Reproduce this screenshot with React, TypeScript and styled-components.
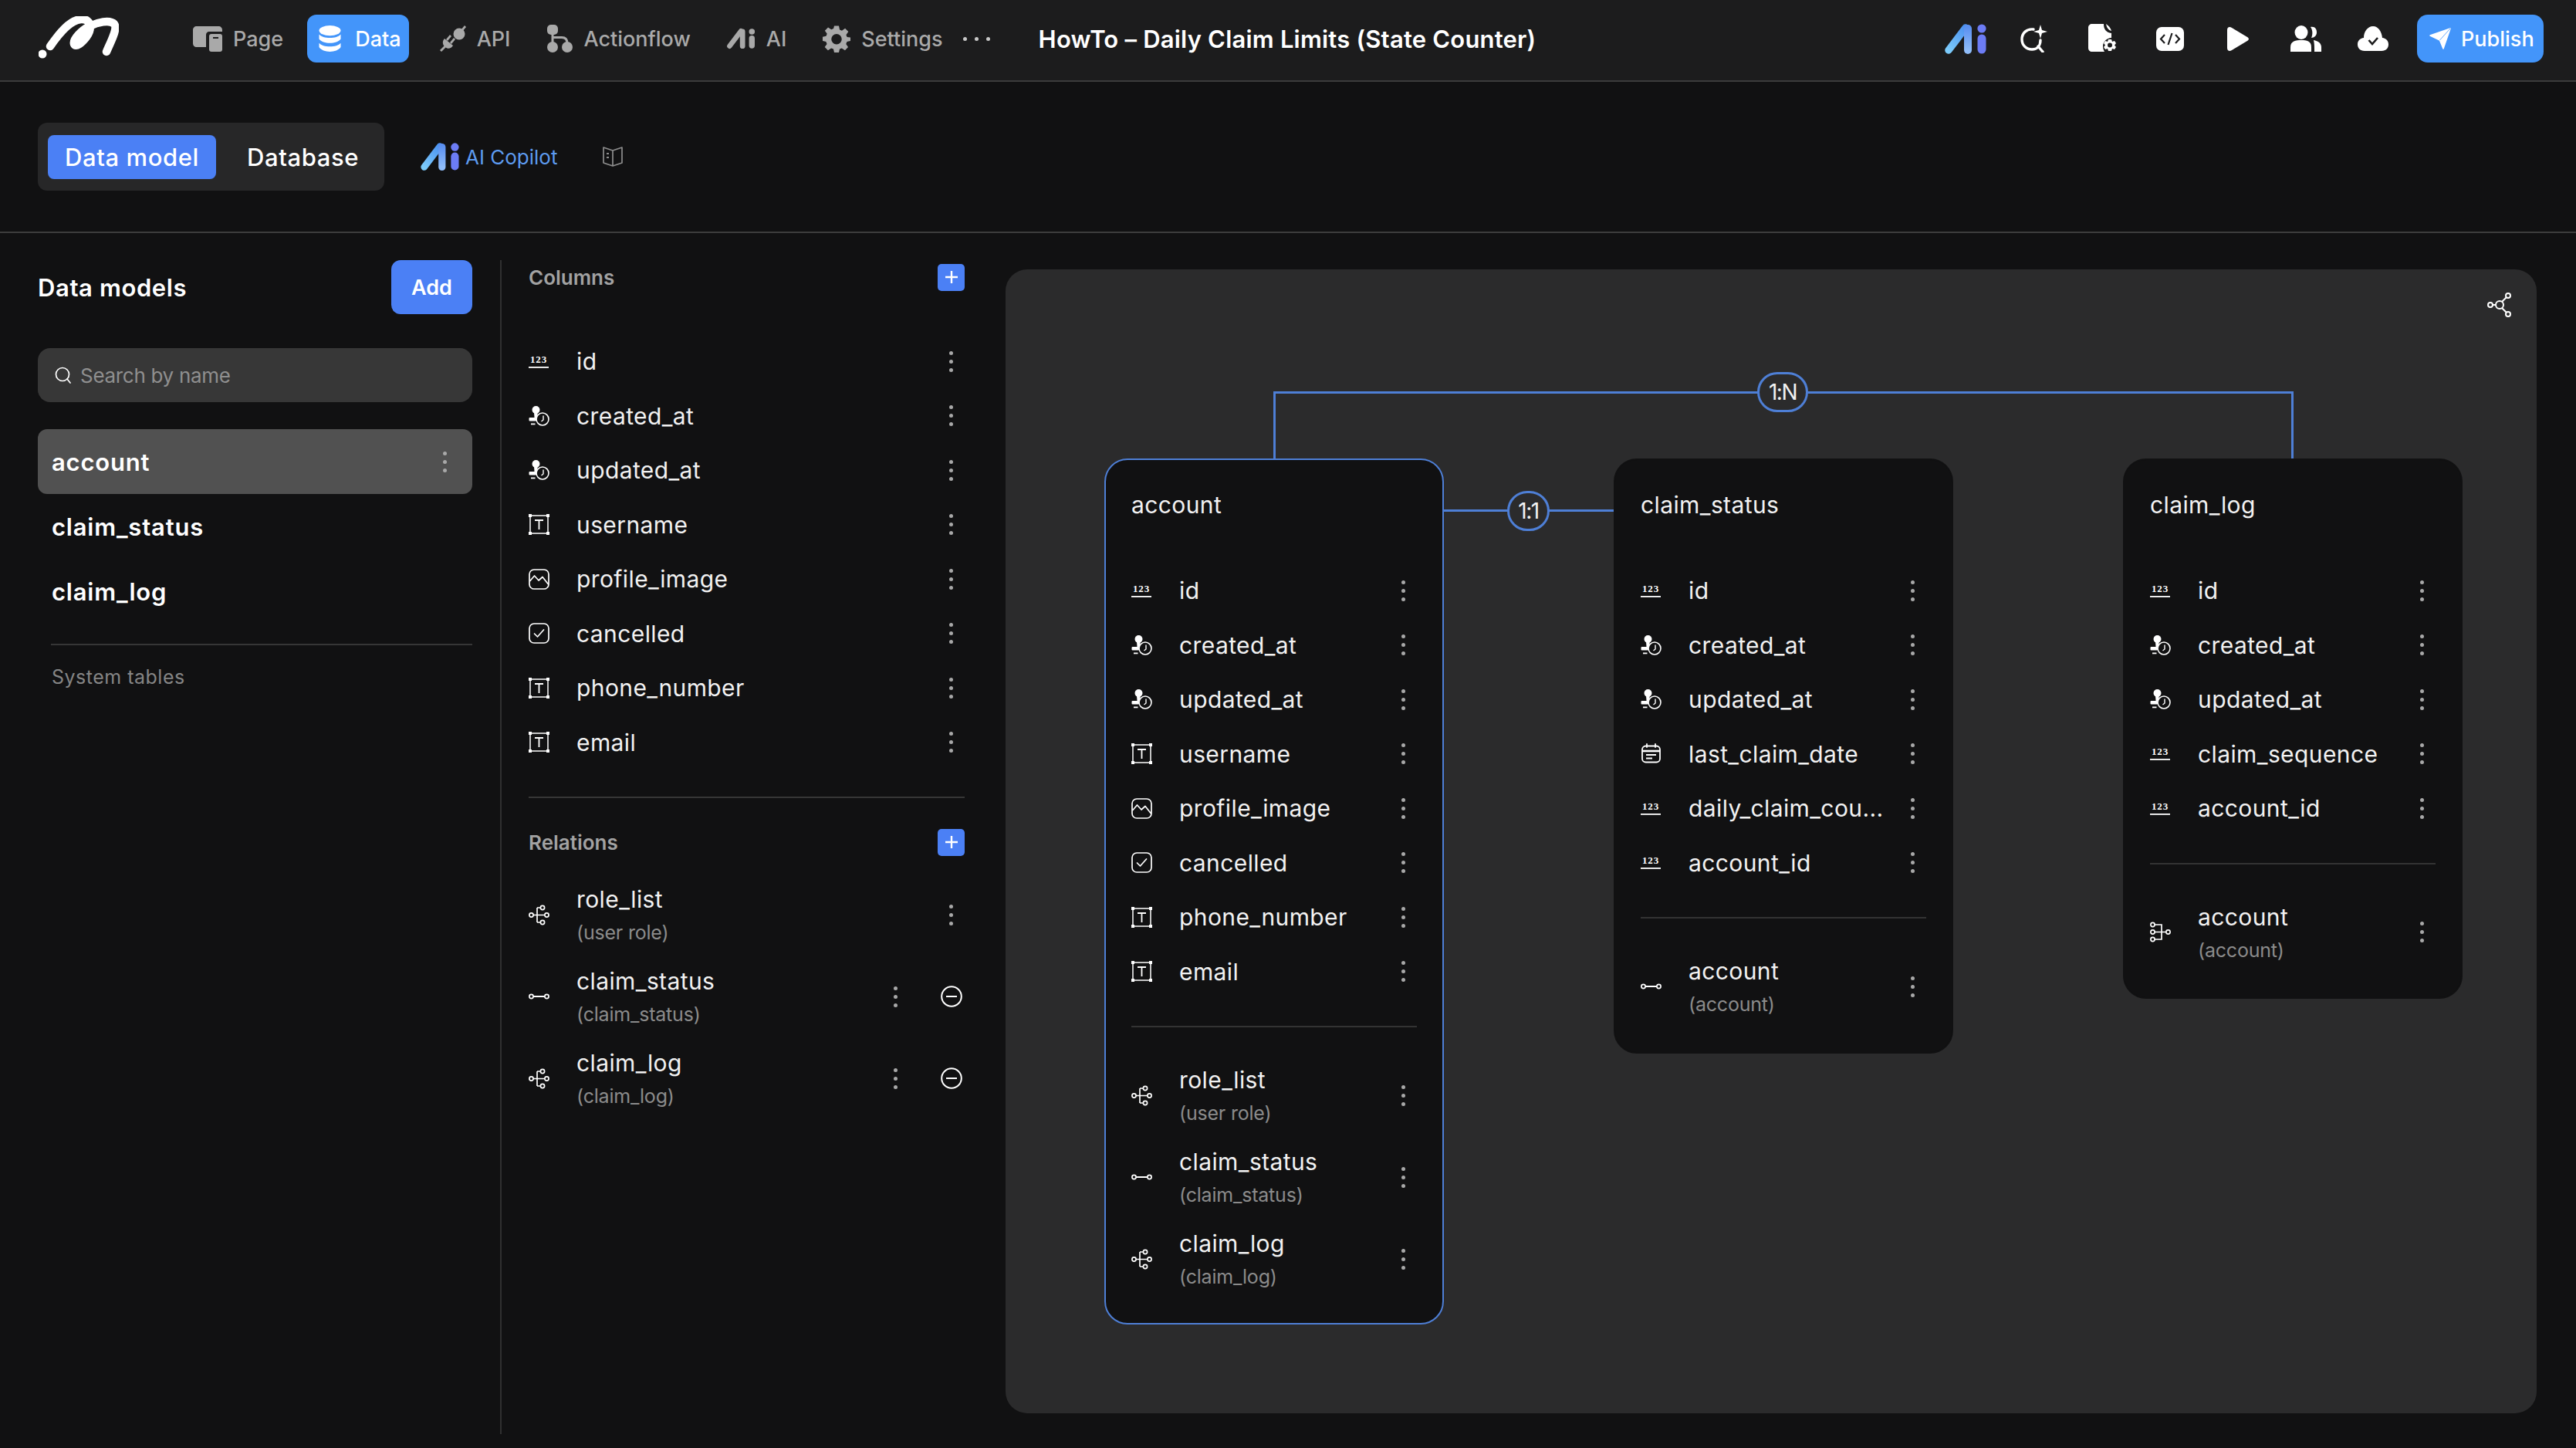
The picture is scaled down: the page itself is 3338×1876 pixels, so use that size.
import React from 'react'
import styled, { createGlobalStyle } from 'styled-components'

const FONT = '"Inter", "Noto Sans", sans-serif'

const GlobalStyle = createGlobalStyle`
  html, body {
    margin: 0;
    padding: 0;
    background: #111112;
    font-family: ${FONT};
  }
  * { box-sizing: border-box; }
`

const Page = styled.div`
  width: 3338px;
  height: 1876px;
  display: flex;
  flex-direction: column;
  background: #111112;
  overflow: hidden;
  color: #fff;
`

const Header = styled.header`
  height: 106px;
  flex-shrink: 0;
  display: flex;
  align-items: center;
  padding: 0 42px 4px 50px;
  background: #1c1c1d;
  border-bottom: 2px solid #3c3c3c;
`

const Logo = styled.svg`
  width: 104px;
  height: 58px;
  margin-right: 96px;
  flex-shrink: 0;
`

const Nav = styled.nav`
  display: flex;
  align-items: center;
  gap: 47px;
`

const NavItem = styled.div<{ $active?: boolean }>`
  display: flex;
  align-items: center;
  gap: ${({ $active }) => ($active ? '16px' : '14px')};
  height: 62px;
  padding: ${({ $active }) => ($active ? '0 10px 0 13px' : '0')};
  margin: ${({ $active }) => ($active ? '0 -7px 0 -16px' : '0')};
  border-radius: 12px;
  font-size: 27px;
  font-weight: 500;
  letter-spacing: 0;
  color: ${({ $active }) => ($active ? '#fff' : '#a9a9a9')};
  background: ${({ $active }) => ($active ? '#4395fa' : 'transparent')};
`

const MoreDots = styled.div`
  display: flex;
  gap: 10px;
  margin-left: 26px;
  & > i {
    width: 5px;
    height: 5px;
    border-radius: 50%;
    background: #c8c8c8;
  }
`

const Title = styled.h1`
  margin: 0 0 0 63px;
  font-size: 31px;
  font-weight: 600;
  letter-spacing: 0.2px;
  white-space: nowrap;
`

const HeaderActions = styled.div`
  margin-left: auto;
  display: flex;
  align-items: center;
`

const ActionSlot = styled.div<{ $w: number }>`
  width: ${({ $w }) => $w}px;
  display: flex;
  align-items: center;
  justify-content: center;
`

const PublishButton = styled.div`
  display: flex;
  align-items: center;
  gap: 13px;
  height: 62px;
  width: 164px;
  margin-left: 13px;
  padding-left: 16px;
  border-radius: 14px;
  background: #4395fa;
  font-size: 27px;
  font-weight: 500;
`

const SubBar = styled.div`
  height: 196px;
  flex-shrink: 0;
  display: flex;
  align-items: center;
  padding-left: 49px;
  border-bottom: 2px solid #3c3c3c;
`

const Tabs = styled.div`
  width: 449px;
  height: 88px;
  display: flex;
  align-items: center;
  padding: 0 13px;
  border-radius: 12px;
  background: #272728;
`

const Tab = styled.div<{ $active?: boolean }>`
  height: 57px;
  display: flex;
  align-items: center;
  padding: ${({ $active }) => ($active ? '0 22px' : '0 0 0 40px')};
  border-radius: 8px;
  font-size: 31px;
  font-weight: 500;
  letter-spacing: 0.6px;
  white-space: nowrap;
  background: ${({ $active }) => ($active ? '#4b80f5' : 'transparent')};
`

const CopilotLink = styled.div`
  display: flex;
  align-items: center;
  gap: 7px;
  margin-left: 47px;
  font-size: 26px;
  color: #5d9bf0;
`

const BookIcon = styled.svg`
  width: 28px;
  height: 28px;
  margin-left: 58px;
`

const Body = styled.div`
  flex: 1;
  min-height: 0;
  display: flex;
  padding: 35px 51px 18px 49px;
`

const ModelsPanel = styled.aside`
  width: 563px;
  flex-shrink: 0;
  display: flex;
  flex-direction: column;
`

const ModelsHead = styled.div`
  height: 70px;
  display: flex;
  align-items: center;
  justify-content: space-between;
`

const ModelsTitle = styled.div`
  font-size: 31px;
  font-weight: 600;
  letter-spacing: 0.6px;
`

const AddButton = styled.div`
  width: 105px;
  height: 70px;
  display: flex;
  align-items: center;
  justify-content: center;
  border-radius: 12px;
  background: #4b80f5;
  font-size: 27px;
  font-weight: 600;
`

const SearchBox = styled.div`
  height: 70px;
  margin-top: 44px;
  display: flex;
  align-items: center;
  gap: 11px;
  padding-left: 22px;
  border-radius: 16px;
  background: #373737;
  color: #8f8f8f;
  font-size: 26px;
  letter-spacing: -0.3px;
`

const ModelList = styled.div`
  margin-top: 35px;
  display: flex;
  flex-direction: column;
`

const ModelRow = styled.div<{ $active?: boolean }>`
  height: 84px;
  display: flex;
  align-items: center;
  justify-content: space-between;
  padding: 0 33px 0 18px;
  border-radius: 12px;
  font-size: 31px;
  font-weight: 600;
  letter-spacing: 0.8px;
  background: ${({ $active }) => ($active ? '#515151' : 'transparent')};
`

const ModelsDivider = styled.div`
  height: 2px;
  margin: 26px 0 0 17px;
  background: #363636;
`

const SystemTables = styled.div`
  margin: 26px 0 0 18px;
  font-size: 25px;
  letter-spacing: 0.5px;
  color: #858585;
`

const ColumnsPanel = styled.section`
  width: 602px;
  flex-shrink: 0;
  margin-left: 36px;
  padding-left: 35px;
  border-left: 2px solid #303030;
  display: flex;
  flex-direction: column;
`

const SectionHead = styled.div<{ $top: number }>`
  display: flex;
  align-items: center;
  justify-content: space-between;
  height: 36px;
  margin-top: ${({ $top }) => $top}px;
  color: #a2a2a2;
  font-size: 26px;
  font-weight: 600;
`

const PlusButton = styled.div`
  width: 35px;
  height: 35px;
  display: flex;
  align-items: center;
  justify-content: center;
  border-radius: 5px;
  background: #4b80f5;
`

const FieldList = styled.div<{ $top: number }>`
  margin-top: ${({ $top }) => $top}px;
  display: flex;
  flex-direction: column;
`

const FieldRow = styled.div`
  height: 70.5px;
  display: flex;
  align-items: center;
  font-size: 30px;
  letter-spacing: 0.4px;
  color: #f2f2f2;
`

const RelationRow = styled.div`
  height: 106px;
  display: flex;
  align-items: center;
  font-size: 30px;
  letter-spacing: 0.4px;
  color: #f2f2f2;
`

const IconSlot = styled.div`
  width: 27px;
  flex-shrink: 0;
  margin-right: 35px;
  display: flex;
  align-items: center;
  justify-content: center;
  color: #fff;
`

const FieldName = styled.div`
  flex: 1;
  min-width: 0;
  white-space: nowrap;
`

const RelationSub = styled.div`
  margin-top: 10px;
  font-size: 25px;
  letter-spacing: -0.2px;
  color: #8b8b8b;
`

const Kebab = styled.div`
  width: 5px;
  flex-shrink: 0;
  display: flex;
  flex-direction: column;
  gap: 6px;
  & > i {
    width: 5px;
    height: 5px;
    border-radius: 50%;
    background: #a8a8a8;
  }
`

const KebabEnd = styled(Kebab)`
  margin-right: 15px;
`

const KebabBeforeMinus = styled(Kebab)`
  margin-right: 56px;
`

const MinusIcon = styled.svg`
  width: 28px;
  height: 28px;
  flex-shrink: 0;
  margin-right: 3px;
`

const PanelDivider = styled.div`
  height: 2px;
  margin-top: 35px;
  background: #363636;
`

const Canvas = styled.main`
  flex: 1;
  position: relative;
  margin: 12px 0 27px 53px;
  border-radius: 28px;
  background: #2b2b2c;
`

const ShareIcon = styled.svg`
  position: absolute;
  top: 30px;
  right: 32px;
  width: 32px;
  height: 32px;
`

const Card = styled.div<{ $x: number; $y: number; $w: number; $h: number; $selected?: boolean }>`
  position: absolute;
  left: ${({ $x }) => $x}px;
  top: ${({ $y }) => $y}px;
  width: ${({ $w }) => $w}px;
  height: ${({ $h }) => $h}px;
  padding: 0 33px;
  border-radius: 30px;
  background: #111112;
  border: 2px solid ${({ $selected }) => ($selected ? '#4e7fd6' : '#111112')};
`

const CardTitle = styled.div`
  height: 116px;
  display: flex;
  align-items: center;
  font-size: 30px;
  letter-spacing: 0.4px;
  color: #f2f2f2;
`

const CardFields = styled.div`
  margin-top: 18px;
  display: flex;
  flex-direction: column;
`

const CardDivider = styled.div`
  height: 2px;
  margin: 35px 0;
  background: #333;
`

const Link = styled.div<{ $x: number; $y: number; $w: number; $h: number }>`
  position: absolute;
  left: ${({ $x }) => $x}px;
  top: ${({ $y }) => $y}px;
  width: ${({ $w }) => $w}px;
  height: ${({ $h }) => $h}px;
  background: #4e7fd6;
`

const LinkBadge = styled.div<{ $x: number; $y: number; $w: number }>`
  position: absolute;
  left: ${({ $x }) => $x}px;
  top: ${({ $y }) => $y}px;
  width: ${({ $w }) => $w}px;
  height: 52px;
  display: flex;
  align-items: center;
  justify-content: center;
  border-radius: 26px;
  border: 3px solid #4e7fd6;
  background: #2b2b2c;
  font-size: 28px;
  letter-spacing: -1.5px;
  color: #f2f2f2;
`

type IconName = 'num' | 'stamp' | 'text' | 'image' | 'check' | 'date' | 'many' | 'one' | 'belongs'

const NumLabel = styled.text`
  font-family: 'Liberation Serif', serif;
  font-size: 13px;
  font-weight: 700;
  letter-spacing: 0.8px;
  fill: #fff;
`

const FieldIcon = ({ name }: { name: IconName }) => {
  switch (name) {
    case 'num':
      return (
        <svg width="27" height="27" viewBox="0 0 27 27" fill="#fff">
          <NumLabel x="13" y="14.5" textAnchor="middle">
            123
          </NumLabel>
          <rect x="0" y="20" width="26" height="1.8" />
        </svg>
      )
    case 'stamp':
      return (
        <svg width="27" height="26" viewBox="0 0 27 26" fill="none">
          <circle cx="9.5" cy="5" r="5" fill="#fff" />
          <path d="M7 8 H12 L10.5 15 H7.5 Z" fill="#fff" />
          <rect x="0.5" y="15" width="9.5" height="4.5" rx="1" fill="#fff" />
          <rect x="3" y="22.5" width="5.5" height="1.8" fill="#fff" />
          <circle cx="18" cy="17" r="8" fill="#111112" stroke="#fff" strokeWidth="1.6" />
          <path d="M19 12.5 V18 L16.5 20" stroke="#fff" strokeWidth="1.4" />
        </svg>
      )
    case 'text':
      return (
        <svg width="27" height="27" viewBox="0 0 27 27" fill="none" stroke="#fff" strokeWidth="1.5">
          <rect x="2" y="2" width="23" height="23" />
          <path d="M8 8 H19 M13.5 8 V20" strokeWidth="1.8" />
          <g fill="#fff" stroke="none">
            <rect x="0" y="0" width="4" height="4" />
            <rect x="23" y="0" width="4" height="4" />
            <rect x="0" y="23" width="4" height="4" />
            <rect x="23" y="23" width="4" height="4" />
          </g>
        </svg>
      )
    case 'image':
      return (
        <svg width="27" height="27" viewBox="0 0 27 27" fill="none" stroke="#fff" strokeWidth="1.7">
          <rect x="1" y="1" width="25" height="25" rx="6" />
          <path d="M1.5 16 L7.5 9 L13 15 L18 10.5 L25.5 20" strokeLinejoin="round" />
        </svg>
      )
    case 'check':
      return (
        <svg width="27" height="27" viewBox="0 0 27 27" fill="none" stroke="#fff" strokeWidth="1.7">
          <rect x="1" y="1" width="25" height="25" rx="6" />
          <path d="M7.5 14 L11.5 18 L19.5 9" strokeLinecap="round" strokeLinejoin="round" />
        </svg>
      )
    case 'date':
      return (
        <svg width="27" height="27" viewBox="0 0 27 27" fill="none" stroke="#fff" strokeWidth="1.8">
          <rect x="2" y="3.5" width="23" height="21" rx="4.5" />
          <path d="M2 10 H25" strokeWidth="2.6" />
          <path d="M7 15 H20 M7 19.5 H15" />
          <path d="M8 1 V5 M19 1 V5" strokeLinecap="round" />
        </svg>
      )
    case 'many':
      return (
        <svg width="27" height="27" viewBox="0 0 27 27" fill="none" stroke="#fff" strokeWidth="1.7">
          <circle cx="3.5" cy="13.5" r="2.6" />
          <circle cx="18" cy="4" r="2.6" />
          <circle cx="23.5" cy="13.5" r="2.6" />
          <circle cx="18" cy="23" r="2.6" />
          <path d="M6 13.5 H21 M11 4 H15.5 M11 4 V23 M11 23 H15.5" />
        </svg>
      )
    case 'one':
      return (
        <svg width="27" height="10" viewBox="0 0 27 10" fill="none" stroke="#fff" strokeWidth="1.7">
          <circle cx="3.5" cy="5" r="2.6" />
          <circle cx="23.5" cy="5" r="2.6" />
          <path d="M6 5 H21" strokeWidth="2" />
        </svg>
      )
    case 'belongs':
      return (
        <svg width="27" height="27" viewBox="0 0 27 27" fill="none" stroke="#fff" strokeWidth="1.7">
          <circle cx="3.5" cy="4" r="2.6" />
          <circle cx="3.5" cy="13.5" r="2.6" />
          <circle cx="3.5" cy="23" r="2.6" />
          <circle cx="23.5" cy="13.5" r="2.6" />
          <path d="M6 4 H15 V23 H6 M6 13.5 H21" />
        </svg>
      )
  }
}

const Dots = () => (
  <>
    <i />
    <i />
    <i />
  </>
)

const AiMark = ({ id, w, h, plain }: { id: string; w: number; h: number; plain?: boolean }) => (
  <svg width={w} height={h} viewBox="0 0 55 39" fill="none">
    <defs>
      <linearGradient id={id} gradientUnits="userSpaceOnUse" x1="4" y1="34" x2="28" y2="4">
        <stop offset="0" stopColor="#7ccbfb" />
        <stop offset="1" stopColor="#4a90f0" />
      </linearGradient>
      <linearGradient id={`${id}-b`} gradientUnits="userSpaceOnUse" x1="30" y1="34" x2="30" y2="4">
        <stop offset="0" stopColor="#8fbcf9" />
        <stop offset="1" stopColor="#5a8ff0" />
      </linearGradient>
    </defs>
    <line x1="5" y1="34" x2="27" y2="5" stroke={plain ? '#a9a9a9' : `url(#${id})`} strokeWidth="9.5" strokeLinecap="round" />
    <line x1="30" y1="6" x2="30" y2="34" stroke={plain ? '#a9a9a9' : `url(#${id}-b)`} strokeWidth="10" strokeLinecap="round" />
    <circle cx="48" cy="6" r="5.6" fill={plain ? '#a9a9a9' : '#6c7cf5'} />
    <line x1="48" y1="19" x2="48" y2="33" stroke={plain ? '#a9a9a9' : '#6c7cf5'} strokeWidth="11" strokeLinecap="round" />
  </svg>
)

const BASE_FIELDS: { icon: IconName; name: string }[] = [
  { icon: 'num', name: 'id' },
  { icon: 'stamp', name: 'created_at' },
  { icon: 'stamp', name: 'updated_at' },
]

const ACCOUNT_FIELDS: { icon: IconName; name: string }[] = [
  ...BASE_FIELDS,
  { icon: 'text', name: 'username' },
  { icon: 'image', name: 'profile_image' },
  { icon: 'check', name: 'cancelled' },
  { icon: 'text', name: 'phone_number' },
  { icon: 'text', name: 'email' },
]

const STATUS_FIELDS: { icon: IconName; name: string }[] = [
  ...BASE_FIELDS,
  { icon: 'date', name: 'last_claim_date' },
  { icon: 'num', name: 'daily_claim_cou...' },
  { icon: 'num', name: 'account_id' },
]

const LOG_FIELDS: { icon: IconName; name: string }[] = [
  ...BASE_FIELDS,
  { icon: 'num', name: 'claim_sequence' },
  { icon: 'num', name: 'account_id' },
]

const ACCOUNT_RELATIONS: { icon: IconName; name: string; sub: string }[] = [
  { icon: 'many', name: 'role_list', sub: '(user role)' },
  { icon: 'one', name: 'claim_status', sub: '(claim_status)' },
  { icon: 'many', name: 'claim_log', sub: '(claim_log)' },
]

const CardBlock = ({
  title,
  fields,
  relations,
  ...place
}: {
  title: string
  fields: { icon: IconName; name: string }[]
  relations: { icon: IconName; name: string; sub: string }[]
  $x: number
  $y: number
  $w: number
  $h: number
  $selected?: boolean
}) => (
  <Card {...place}>
    <CardTitle>{title}</CardTitle>
    <CardFields>
      {fields.map((f) => (
        <FieldRow key={f.name}>
          <IconSlot>
            <FieldIcon name={f.icon} />
          </IconSlot>
          <FieldName>{f.name}</FieldName>
          <KebabEnd>
            <Dots />
          </KebabEnd>
        </FieldRow>
      ))}
    </CardFields>
    <CardDivider />
    {relations.map((r) => (
      <RelationRow key={r.name}>
        <IconSlot>
          <FieldIcon name={r.icon} />
        </IconSlot>
        <FieldName>
          {r.name}
          <RelationSub>{r.sub}</RelationSub>
        </FieldName>
        <KebabEnd>
          <Dots />
        </KebabEnd>
      </RelationRow>
    ))}
  </Card>
)

const PlusGlyph = () => (
  <svg width="16" height="16" viewBox="0 0 16 16" stroke="#fff" strokeWidth="2.4">
    <path d="M8 0 V16 M0 8 H16" />
  </svg>
)

export default function App() {
  return (
    <Page>
      <GlobalStyle />
      <Header>
        <Logo viewBox="10 8 104 58" fill="none" stroke="#fff" strokeLinecap="round">
          <circle cx="15" cy="57" r="5.5" fill="#fff" stroke="none" />
          <path
            d="M25 47 C36 31 50 13 65 12 C78 11 80 24 72 35 C66 43 58 49 56 44 C54 38 66 26 76 21 C86 16 102 12 108 18 C113 24 103 42 98 54"
            strokeWidth="10.5"
          />
        </Logo>
        <Nav>
          <NavItem>
            <svg width="38" height="33" viewBox="0 0 38 33" fill="#a9a9a9">
              <path d="M5 0 H33 C36 0 38 2 38 5 V7 H22 C18 7 17 9 17 12 V27 H5 C2 27 0 25 0 22 V5 C0 2 2 0 5 0 Z" />
              <rect x="21" y="10" width="17" height="23" rx="3" />
              <rect x="26" y="14" width="7" height="2" fill="#1c1c1d" />
            </svg>
            Page
          </NavItem>
          <NavItem $active>
            <svg width="33" height="35" viewBox="0 0 33 40" fill="#fff">
              <ellipse cx="16.5" cy="7.5" rx="16" ry="7.5" />
              <path d="M0.5 13 C6 20 27 20 32.5 13 V20 C27 28 6 28 0.5 20 Z" />
              <path d="M0.5 26 C6 33 27 33 32.5 26 V32 C27 41 6 41 0.5 32 Z" />
            </svg>
            Data
          </NavItem>
          <NavItem>
            <svg width="34" height="34" viewBox="0 0 34 34" fill="#a9a9a9">
              <circle cx="25" cy="11" r="7.5" />
              <path d="M27 6 L32 0 L34 2 L29 8 Z" />
              <path d="M6 17 L17 26 C15 30 10 31 7 28 C3 25 3 20 6 17 Z" />
              <path d="M8 18 L13 12 L15 14 L10 20 Z M13 22 L18 16 L20 18 L15 24 Z" />
              <path d="M6 26 L0 32 L2 34 L8 28 Z" />
            </svg>
            API
          </NavItem>
          <NavItem>
            <svg width="34" height="36" viewBox="0 0 34 36" fill="#a9a9a9">
              <rect x="1" y="0" width="14" height="13" rx="5" />
              <rect x="6.5" y="12" width="3" height="12" />
              <circle cx="8" cy="29" r="7" />
              <circle cx="27" cy="29" r="7" />
              <path d="M8 16.5 H20 C25 16.5 27 19 27 24" fill="none" stroke="#a9a9a9" strokeWidth="3" />
            </svg>
            Actionflow
          </NavItem>
          <NavItem>
            <AiMark id="ai-nav" w={37} h={30} plain />
            AI
          </NavItem>
          <NavItem>
            <svg width="36" height="36" viewBox="0 0 24 24" fill="#a9a9a9">
              <path
                fillRule="evenodd"
                d="M10 1 H14 L14.7 4.3 L16.6 5.1 L19.4 3.2 L22.2 6 L20.3 8.8 L21.1 10.7 L24 11 V14 L21 14.7 L20.2 16.6 L22 19.4 L19.3 22.2 L16.5 20.4 L14.7 21 L14 24 H10 L9.3 21 L7.4 20.3 L4.6 22.2 L1.8 19.4 L3.7 16.6 L2.9 14.7 L0 14 V10.5 L3 9.8 L3.8 7.9 L1.9 5.1 L4.7 2.3 L7.5 4.2 L9.4 3.4 Z M12 8 A4.5 4.5 0 1 0 12 17 A4.5 4.5 0 1 0 12 8 Z"
              />
            </svg>
            Settings
          </NavItem>
        </Nav>
        <MoreDots>
          <Dots />
        </MoreDots>
        <Title>HowTo – Daily Claim Limits (State Counter)</Title>
        <HeaderActions>
          <ActionSlot $w={88}>
            <AiMark id="ai-head" w={55} h={39} />
          </ActionSlot>
          <ActionSlot $w={88.75}>
            <svg width="36" height="36" viewBox="0 0 36 36" fill="none" stroke="#fff" strokeWidth="3.4" strokeLinecap="round">
              <path d="M17 6 C8 5 2 11 2 19 C2 27 8 32 15 32 C22 32 26 27 26 20" />
              <path d="M23 28 L29 35" />
              <path d="M26 0 L28 7 L35 9 L28 11 L26 18 L24 11 L17 9 L24 7 Z" fill="#fff" stroke="none" />
            </svg>
          </ActionSlot>
          <ActionSlot $w={87.75}>
            <svg width="37" height="38" viewBox="0 0 37 38" fill="#fff">
              <path d="M5 0 H20 C20 7 23 11 30 12 V18 C24 18 19 23 19 29 C19 32 20 34 21 36 H5 C2 36 0 34 0 31 V5 C0 2 2 0 5 0 Z" />
              <path d="M23 0 C26 2 29 5 30 9 C26 8 24 5 23 0 Z" />
              <path
                fillRule="evenodd"
                d="M26 20 H30 L31 23 L34 22 L36 25 L34 27.5 L36 30 L34 33 L31 32 L30 35 H26 L25 32 L22 33 L20 30 L22 27.5 L20 25 L22 22 L25 23 Z M28 24.5 A3 3 0 1 0 28 30.5 A3 3 0 1 0 28 24.5 Z"
              />
            </svg>
          </ActionSlot>
          <ActionSlot $w={88.5}>
            <svg width="36" height="31" viewBox="0 0 36 31" fill="none">
              <rect width="36" height="31" rx="7" fill="#fff" />
              <path d="M11 10 L6 15.5 L11 21 M25 10 L30 15.5 L25 21 M20.5 8 L15.5 23" stroke="#1c1c1d" strokeWidth="2.2" />
            </svg>
          </ActionSlot>
          <ActionSlot $w={87.75}>
            <svg width="28" height="31" viewBox="0 0 28 31" fill="#fff">
              <path d="M0 4 C0 0 3 -1 6 1 L26 13 C28.5 14.5 28.5 16.5 26 18 L6 30 C3 32 0 31 0 27 Z" />
            </svg>
          </ActionSlot>
          <ActionSlot $w={86.5}>
            <svg width="40" height="34" viewBox="0 0 40 34" fill="#fff">
              <ellipse cx="14" cy="9" rx="8.5" ry="9" />
              <path d="M0 34 V28 C0 20 7 19 14 19 C21 19 27 20 27 28 V34 Z" />
              <path d="M26 2 C32 1 34 5 34 9 C34 13 31 16 27 16 C29 12 29 6 26 2 Z" />
              <path d="M30 19 C36 20 40 23 40 28 V34 H31 C31 28 31 23 30 19 Z" />
            </svg>
          </ActionSlot>
          <ActionSlot $w={88.25}>
            <svg width="40" height="32" viewBox="0 0 40 32" fill="none">
              <path d="M9 32 C3 32 0 28 0 23.5 C0 19 3 15.5 8 15 C8 7 13 0 20 0 C27 0 31 7 32 15 C37 15.5 40 19 40 23.5 C40 28 37 32 31 32 Z" fill="#fff" />
              <path d="M14.5 18 L19 23 L26 15" stroke="#1c1c1d" strokeWidth="2.6" />
            </svg>
          </ActionSlot>
          <PublishButton>
            <svg width="28" height="28" viewBox="0 0 28 28" fill="#fff" stroke="#fff" strokeWidth="1.6" strokeLinejoin="round">
              <path d="M27 1 L18 27 L13.5 16 L1 10 Z" />
              <path d="M27 1 L13.5 16" stroke="#4395fa" strokeWidth="0.8" />
            </svg>
            Publish
          </PublishButton>
        </HeaderActions>
      </Header>
      <SubBar>
        <Tabs>
          <Tab $active>Data model</Tab>
          <Tab>Database</Tab>
        </Tabs>
        <CopilotLink>
          <AiMark id="ai-copilot" w={51} h={36} />
          AI Copilot
        </CopilotLink>
        <BookIcon viewBox="0 0 28 28" fill="none" stroke="#8e8e8e" strokeWidth="1.7">
          <path d="M14 6 L2 2 V22 L14 26 L26 22 V2 L14 6 V26" strokeLinejoin="round" />
          <path d="M6 10 H9 M6 15 H9" strokeWidth="2" />
        </BookIcon>
      </SubBar>
      <Body>
        <ModelsPanel>
          <ModelsHead>
            <ModelsTitle>Data models</ModelsTitle>
            <AddButton>Add</AddButton>
          </ModelsHead>
          <SearchBox>
            <svg width="22" height="22" viewBox="0 0 22 22" fill="none" stroke="#fff" strokeWidth="1.7">
              <circle cx="10" cy="10" r="8.5" />
              <path d="M16 16 L20 21" strokeLinecap="round" />
            </svg>
            Search by name
          </SearchBox>
          <ModelList>
            <ModelRow $active>
              account
              <Kebab>
                <Dots />
              </Kebab>
            </ModelRow>
            <ModelRow>claim_status</ModelRow>
            <ModelRow>claim_log</ModelRow>
          </ModelList>
          <ModelsDivider />
          <SystemTables>System tables</SystemTables>
        </ModelsPanel>
        <ColumnsPanel>
          <SectionHead $top={4}>
            Columns
            <PlusButton>
              <PlusGlyph />
            </PlusButton>
          </SectionHead>
          <FieldList $top={56}>
            {ACCOUNT_FIELDS.map((f) => (
              <FieldRow key={f.name}>
                <IconSlot>
                  <FieldIcon name={f.icon} />
                </IconSlot>
                <FieldName>{f.name}</FieldName>
                <KebabEnd>
                  <Dots />
                </KebabEnd>
              </FieldRow>
            ))}
          </FieldList>
          <PanelDivider />
          <SectionHead $top={39}>
            Relations
            <PlusButton>
              <PlusGlyph />
            </PlusButton>
          </SectionHead>
          <FieldList $top={23}>
            {ACCOUNT_RELATIONS.map((r, i) => (
              <RelationRow key={r.name}>
                <IconSlot>
                  <FieldIcon name={r.icon} />
                </IconSlot>
                <FieldName>
                  {r.name}
                  <RelationSub>{r.sub}</RelationSub>
                </FieldName>
                {i === 0 ? (
                  <KebabEnd>
                    <Dots />
                  </KebabEnd>
                ) : (
                  <>
                    <KebabBeforeMinus>
                      <Dots />
                    </KebabBeforeMinus>
                    <MinusIcon viewBox="0 0 28 28" fill="none" stroke="#fff" strokeWidth="2">
                      <circle cx="14" cy="14" r="12.8" />
                      <path d="M7 14 H21" />
                    </MinusIcon>
                  </>
                )}
              </RelationRow>
            ))}
          </FieldList>
        </ColumnsPanel>
        <Canvas>
          <ShareIcon viewBox="0 0 32 32" fill="none" stroke="#fff" strokeWidth="2">
            <circle cx="4" cy="16" r="3" />
            <circle cx="16" cy="16" r="5" />
            <circle cx="27" cy="4" r="3" />
            <circle cx="27" cy="28" r="3" />
            <path d="M7 16 H11 M19 12 L25 6 M19 20 L25 26" />
          </ShareIcon>

          <Link $x={347} $y={158} $w={1319} $h={3} />
          <Link $x={347} $y={158} $w={3} $h={90} />
          <Link $x={1666} $y={158} $w={3} $h={90} />
          <Link $x={566} $y={311} $w={222} $h={3} />
          <LinkBadge $x={974} $y={133} $w={66}>1:N</LinkBadge>
          <LinkBadge $x={650} $y={287} $w={55}>1:1</LinkBadge>

          <CardBlock $x={128} $y={245} $w={440} $h={1122} $selected title="account" fields={ACCOUNT_FIELDS} relations={ACCOUNT_RELATIONS} />
          <CardBlock
            $x={788}
            $y={245}
            $w={440}
            $h={771}
            title="claim_status"
            fields={STATUS_FIELDS}
            relations={[{ icon: 'one', name: 'account', sub: '(account)' }]}
          />
          <CardBlock
            $x={1448}
            $y={245}
            $w={440}
            $h={700}
            title="claim_log"
            fields={LOG_FIELDS}
            relations={[{ icon: 'belongs', name: 'account', sub: '(account)' }]}
          />
        </Canvas>
      </Body>
    </Page>
  )
}
